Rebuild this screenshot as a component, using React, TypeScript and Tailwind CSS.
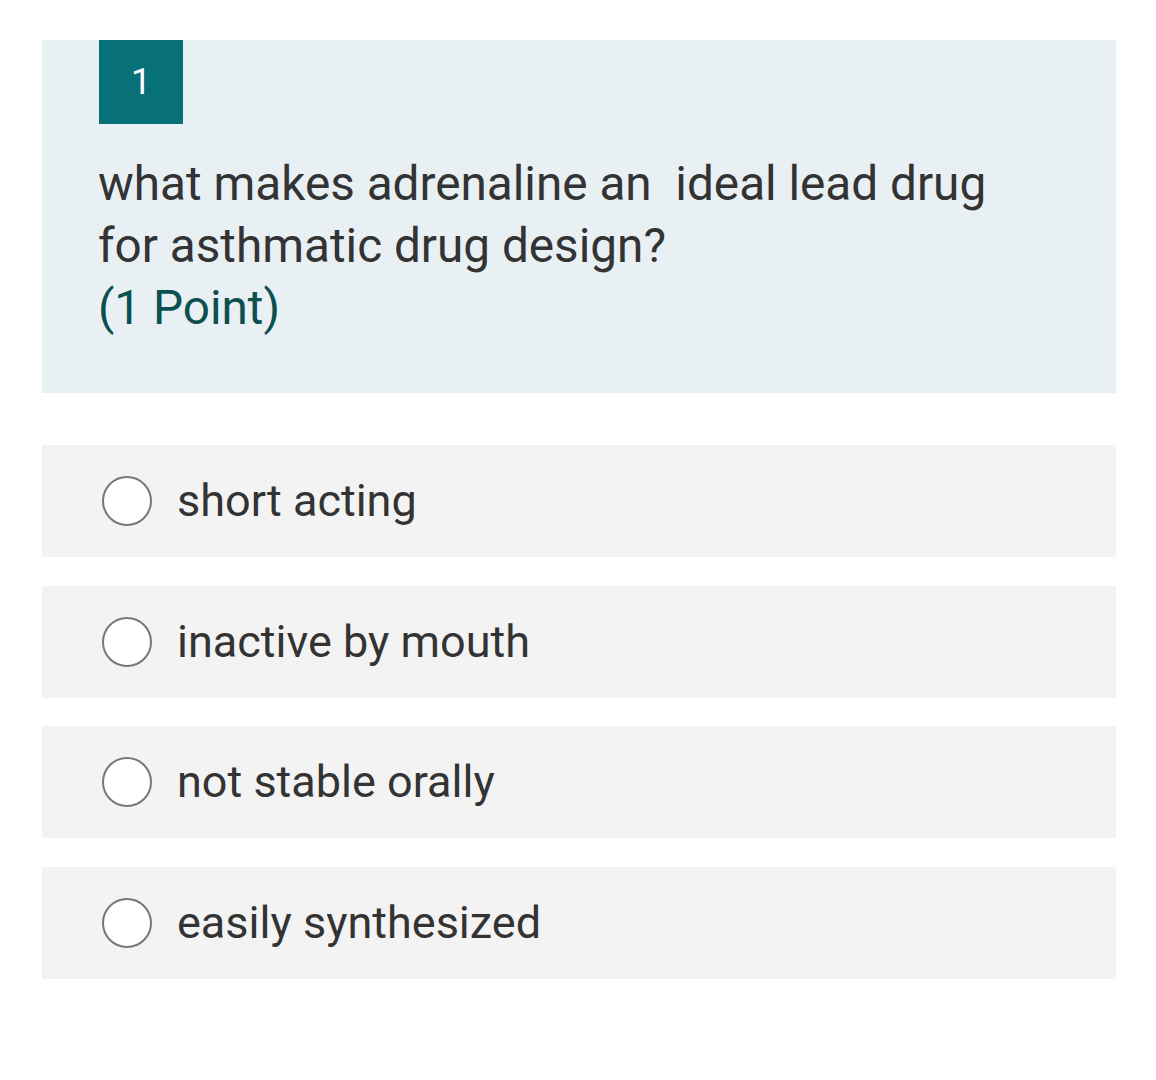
const options = ["short acting", "inactive by mouth", "not stable orally", "easily synthesized"];

export default function App() {
  return (
    <div className="min-h-[1080px] bg-white pt-10 pl-[42px] pr-10 font-['Roboto',sans-serif]">
      <section className="bg-[#e8f0f3] pl-[57px] pr-10 pb-[54px]">
        <div className="flex h-[84px] w-[84px] items-center justify-center bg-[#077177] text-[36px] text-white">
          1
        </div>
        <div className="mt-[29px] -ml-px text-[47.7px] leading-[62px] text-[#333333]">
          <p>what makes adrenaline an&nbsp; ideal lead drug</p>
          <p>for asthmatic drug design?</p>
          <p className="text-[#0c4f4f]">(1 Point)</p>
        </div>
      </section>

      <div className="mt-[52px] flex flex-col gap-[28.5px]">
        {options.map((opt) => (
          <label key={opt} className="flex h-[112px] items-center bg-[#f3f3f3] pl-[60px]">
            <span className="h-[50px] w-[50px] shrink-0 rounded-full border-2 border-[#777777] bg-white" />
            <span className="ml-[25px] text-[45px] text-[#333333]">{opt}</span>
          </label>
        ))}
      </div>
    </div>
  );
}
